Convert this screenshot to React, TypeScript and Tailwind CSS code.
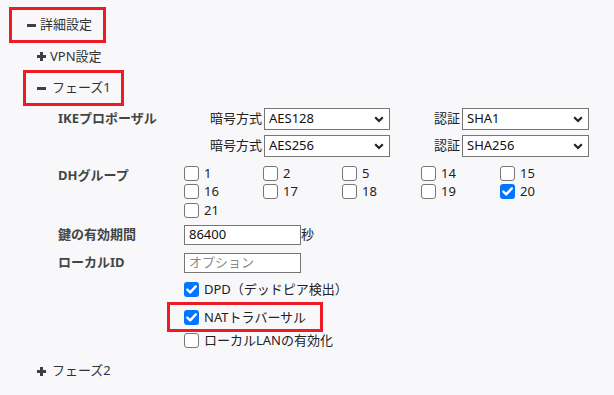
import React from 'react';

const FONT = "font-['Noto_Sans','Noto_Sans_CJK_JP',sans-serif]";

const Minus: React.FC = () => (
  <svg width="9" height="9" viewBox="0 0 9 9" className="shrink-0">
    <rect x="0" y="3" width="9" height="3" fill="#3a3f48" />
  </svg>
);

const Plus: React.FC = () => (
  <svg width="9" height="9" viewBox="0 0 9 9" className="shrink-0">
    <rect x="0" y="3" width="9" height="3" fill="#3a3f48" />
    <rect x="3" y="0" width="3" height="9" fill="#3a3f48" />
  </svg>
);

const Box: React.FC<{ checked?: boolean }> = ({ checked }) =>
  checked ? (
    <span className="w-[15px] h-[15px] shrink-0 rounded-[3px] bg-[#0075ff] flex items-center justify-center">
      <svg width="11" height="9" viewBox="0 0 11 9">
        <path d="M1.3 4.6 L4.2 7.4 L9.8 1.4" fill="none" stroke="#fff" strokeWidth="2.4" strokeLinecap="round" strokeLinejoin="round" />
      </svg>
    </span>
  ) : (
    <span className="w-[15px] h-[15px] shrink-0 rounded-[3px] border border-[#767676] bg-white" />
  );

const Check: React.FC<{ label: string; checked?: boolean }> = ({ label, checked }) => (
  <div className="flex items-center gap-[5px] text-[13px] leading-none text-[#222]">
    <Box checked={checked} />
    <span>{label}</span>
  </div>
);

const Select: React.FC<{ value: string; width: string }> = ({ value, width }) => (
  <div className={`${width} h-[22px] border border-[#767676] bg-white flex items-center justify-between pl-[4px] pr-[5px] text-[13px] text-[#111]`}>
    <span>{value}</span>
    <svg width="10" height="7" viewBox="0 0 10 7">
      <path d="M1.2 1.3 L5 5 L8.8 1.3" fill="none" stroke="#222" strokeWidth="2.2" />
    </svg>
  </div>
);

const Label: React.FC<{ children: React.ReactNode; className?: string }> = ({ children, className = '' }) => (
  <div className={`w-[184px] pl-[58px] shrink-0 font-bold text-[13px] text-[#444] flex items-center ${className}`}>
    {children}
  </div>
);

const dh = [
  { n: '1' }, { n: '2' }, { n: '5' }, { n: '14' }, { n: '15' },
  { n: '16' }, { n: '17' }, { n: '18' }, { n: '19' }, { n: '20', c: true },
  { n: '21' },
];

export default function App() {
  return (
    <div className={`w-[614px] h-[395px] bg-[#f8f8fb] pt-[7px] overflow-hidden ${FONT}`}>
      <div className="ml-[9px] w-[97px] h-[36px] border-[3px] border-[#ec1c24] flex items-center pl-[15px] gap-[4px] text-[13px] text-[#333]">
        <Minus />
        <span>詳細設定</span>
      </div>

      <div className="h-[27px] flex items-center pl-[37px] gap-[4px] text-[13px] text-[#333]">
        <Plus />
        <span>VPN設定</span>
      </div>

      <div className="ml-[23px] w-[101px] h-[36px] border-[3px] border-[#ec1c24] flex items-center pl-[11px] gap-[6px] text-[13px] text-[#333]">
        <Minus />
        <span>フェーズ1</span>
      </div>

      {/* IKE proposal */}
      <div className="flex mt-[2px]">
        <Label className="h-[22px]">IKEプロポーザル</Label>
        <div className="flex flex-col gap-[5px]">
          {[['AES128', 'SHA1'], ['AES256', 'SHA256']].map(([enc, auth]) => (
            <div key={enc} className="flex items-center text-[13px] text-[#222]">
              <span className="w-[80px] text-right pr-[2px]">暗号方式</span>
              <Select value={enc} width="w-[126px]" />
              <span className="w-[72px] text-right pr-[2px]">認証</span>
              <Select value={auth} width="w-[127px]" />
            </div>
          ))}
        </div>
      </div>

      {/* DH group */}
      <div className="flex mt-[7px]">
        <Label className="h-[18.5px] mt-[2px] items-center">DHグループ</Label>
        <div className="grid grid-cols-[repeat(5,79px)] auto-rows-[18.5px] items-center">
          {dh.map((d) => (
            <Check key={d.n} label={d.n} checked={d.c} />
          ))}
        </div>
      </div>

      <div className="flex mt-[5.5px] items-center">
        <Label className="h-[20px]">鍵の有効期間</Label>
        <div className="w-[117px] h-[20px] border border-[#767676] bg-white pl-[4px] flex items-center text-[13px] text-[#111]">86400</div>
        <span className="text-[13px] text-[#222]">秒</span>
      </div>

      <div className="flex mt-[8px] items-center">
        <Label className="h-[20px]">ローカルID</Label>
        <div className="w-[117px] h-[20px] border border-[#767676] bg-white pl-[4px] flex items-center text-[13px] text-[#8a8a8a]">オプション</div>
      </div>

      <div className="ml-[167px] mt-[9px]">
        <div className="pl-[17px] h-[15px] flex items-center">
          <Check label="DPD（デッドピア検出）" checked />
        </div>
        <div className="mt-[5px] w-[156px] h-[30px] border-[3px] border-[#ec1c24] pl-[14px] flex items-center">
          <Check label="NATトラバーサル" checked />
        </div>
        <div className="mt-[1px] pl-[17px] h-[15px] flex items-center">
          <Check label="ローカルLANの有効化" />
        </div>
      </div>

      <div className="mt-[13px] h-[20px] flex items-center pl-[37px] gap-[6px] text-[13px] text-[#333]">
        <Plus />
        <span>フェーズ2</span>
      </div>
    </div>
  );
}
